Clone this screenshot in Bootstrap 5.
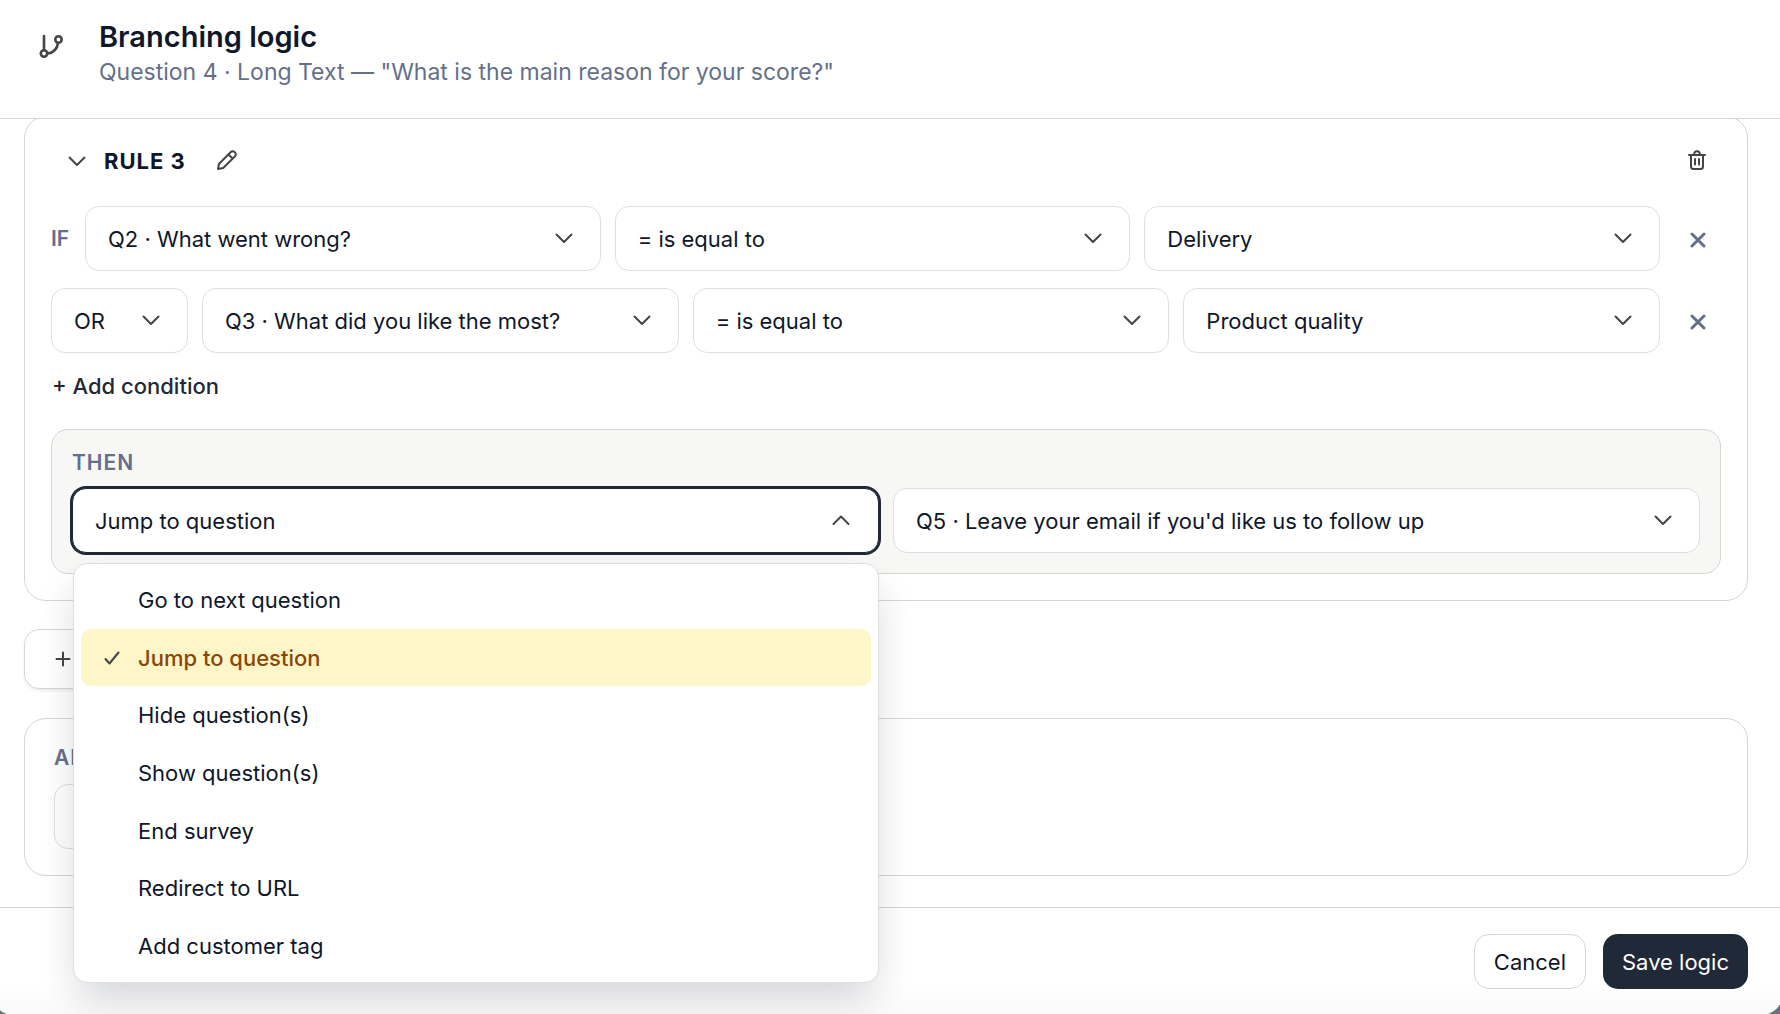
<!DOCTYPE html>
<html lang="en">
<head>
<meta charset="utf-8">
<meta name="viewport" content="width=device-width, initial-scale=1">
<title>Branching logic</title>
<link href="https://cdn.jsdelivr.net/npm/bootstrap@5.3.0/dist/css/bootstrap.min.css" rel="stylesheet">
<style>
  :root { --ink: #0f172a; --navy: #1f2937; --muted: #64708a; --line: #d6d6d1; --line-soft: #dedfe0; --icon: #454545; }
  body { font-family: Inter, "Liberation Sans", sans-serif; font-size: 22px; line-height: 32px; color: var(--ink); background: #6b727e; overflow: hidden; }
  svg { display: block; fill: none; stroke: var(--icon); stroke-width: 2; stroke-linecap: round; stroke-linejoin: round; }
  .dialog { min-height: calc(100vh + 1px); margin: 0 -3px 0 -8px; background: #fff; border-radius: 22px; }
  .dialog-head { position: relative; z-index: 2; background: #fff; border-bottom: 1px solid var(--line); padding: 18px 35px 30px 46px; gap: 34px; }
  .dialog-head svg { margin-top: 13px; stroke-width: 2.6; }
  .dialog-title { font-size: 29px; line-height: 38px; font-weight: 600; }
  .dialog-sub { color: var(--muted); font-size: 23px; }
  .dialog-main { padding: 0 35px 30px 32px; }
  .dialog-foot { border-top: 1px solid var(--line); border-radius: 0 0 22px 22px; background: linear-gradient(#fff 70%, #fafafa); padding: 26px 35px 26px 32px; gap: 17px; }
  .panel { border: 1px solid var(--line); border-radius: 22px; background: #fff; }
  .rule-panel { margin-top: -3px; padding: 21px 26px 26px; }
  .rule-head { height: 46px; padding: 0 14px 0 17px; margin-bottom: 22px; gap: 18px; }
  .rule-name { font-weight: 700; letter-spacing: 1px; }
  .rename { margin-left: 12px; }
  .tag { font-size: 21px; line-height: 26px; font-weight: 600; color: var(--muted); }
  .spaced { letter-spacing: 1px; }
  .plain-btn { border: 0; background: none; padding: 0; color: inherit; }
  .cond { gap: 14px; margin-bottom: 17px; }
  .if-tag { width: 20px; }
  .picker { height: 65px; padding: 0 60px 0 22px; font-size: 22px; line-height: 32px; color: var(--ink); border: 1px solid var(--line-soft); border-radius: 14px; background-color: #fff;
    background-image: url("data:image/svg+xml,%3csvg xmlns='http://www.w3.org/2000/svg' viewBox='0 0 18 11' fill='none' stroke='%23454545' stroke-width='2' stroke-linecap='round' stroke-linejoin='round'%3e%3cpath d='M1.5 1.5 9 9l7.500-7.500'/%3e%3c/svg%3e");
    background-size: 18px 11px; background-position: right 27px center; flex: 1 1 0; min-width: 0; }
  .picker-join { flex: 0 0 137px; padding-right: 40px; }
  .remove { width: 47px; height: 47px; }
  .remove svg { stroke: var(--muted); stroke-width: 3; }
  .add-cond { font-weight: 500; color: var(--navy); padding: 0 1px; }
  .then-box { margin-top: 27px; border: 1px solid var(--line); border-radius: 17px; background: #f7f7f5; padding: 20px; }
  .then-row { gap: 14px; margin-top: 12px; }
  .picker-wrap { flex: 1 1 0; min-width: 0; }
  .picker-open { width: 100%; background-image: none; padding-right: 28px; text-align: left; border-color: var(--navy); box-shadow: 0 0 0 2px var(--navy); }
  .menu { top: 75px; left: 1px; right: 0; min-height: 420px; padding: 7px; border: 1px solid var(--line-soft); border-radius: 14px; box-shadow: 0 20px 40px -6px rgba(15,23,42,.19); font-size: 22px; color: var(--ink); z-index: 5; }
  .menu li { flex: 1 1 0; }
  .menu .dropdown-item { color: var(--ink); border-radius: 10px; height: 100%; padding: 0 24px 0 22px; gap: 17px; }
  .menu .dropdown-item.active { background: #fef5c9; color: #8a4708; font-weight: 500; }
  .menu .tick { width: 18px; }
  .add-rule { margin-top: 28px; width: 170px; height: 60px; padding: 0 30px; border: 1px solid var(--line); border-radius: 15px; box-shadow: 0 2px 3px rgba(0,0,0,.07); }
  .after-panel { margin-top: 29px; padding: 26px 29px; }
  .after-panel .picker { width: 620px; margin-top: 13px; }
  .foot-btn { height: 55px; padding: 0 19px; border-radius: 15px; font-size: 22px; line-height: 32px; font-weight: 400; }
  .foot-cancel { border: 1px solid var(--line); background: #fff; color: var(--ink); }
  .foot-save { background: var(--navy); color: #fff; border: 0; }
</style>
</head>
<body>
<div class="dialog d-flex flex-column" role="dialog" aria-labelledby="dlgTitle">
  <header class="dialog-head d-flex align-items-start">
    <svg width="27" height="31" viewBox="0 0 27 31" aria-hidden="true"><path d="M6 5v14"/><circle cx="6" cy="22.500" r="3.200"/><circle cx="20.500" cy="8.500" r="3.200"/><path d="M20 12c-.8 6-4.500 9.700-10.500 10.500"/></svg>
    <div>
      <h1 class="dialog-title m-0" id="dlgTitle">Branching logic</h1>
      <p class="dialog-sub m-0">Question 4 · Long Text — "What is the main reason for your score?"</p>
    </div>
  </header>

  <main class="dialog-main flex-grow-1">
    <section class="panel rule-panel">
      <div class="rule-head d-flex align-items-center">
        <button class="plain-btn" aria-label="Collapse rule"><svg width="18" height="11" viewBox="0 0 18 11"><path d="M1.500 1.500 9 9l7.500-7.500"/></svg></button>
        <span class="rule-name">RULE 3</span>
        <button class="plain-btn rename" aria-label="Rename rule"><svg width="22" height="24" viewBox="0 0 22 24"><path d="M2 20l.9-5L14.800 3a2.600 2.600 0 0 1 3.800 0l.4.400a2.600 2.600 0 0 1 0 3.800L7.200 19 2 20zM12.500 5.500l4 4"/></svg></button>
        <button class="plain-btn ms-auto" aria-label="Delete rule"><svg width="20" height="24" viewBox="0 0 20 24"><path d="M2 6h16M7 6c0-5 6-5 6 0M4 6v11.500a2.500 2.500 0 0 0 2.500 2.500h7a2.500 2.500 0 0 0 2.500-2.500V6M8 10v5.500M12 10v5.500"/></svg></button>
      </div>

      <div class="cond d-flex align-items-center">
        <span class="tag if-tag">IF</span>
        <select class="form-select picker" aria-label="Question"><option>Q2 · What went wrong?</option></select>
        <select class="form-select picker" aria-label="Operator"><option>= is equal to</option></select>
        <select class="form-select picker" aria-label="Value"><option>Delivery</option></select>
        <button class="plain-btn remove d-flex align-items-center justify-content-center" aria-label="Remove condition"><svg width="16" height="18" viewBox="0 0 16 18"><path d="M2 4l12 12M14 4 2 16"/></svg></button>
      </div>
      <div class="cond d-flex align-items-center">
        <select class="form-select picker picker-join" aria-label="Join with"><option>OR</option><option>AND</option></select>
        <select class="form-select picker" aria-label="Question"><option>Q3 · What did you like the most?</option></select>
        <select class="form-select picker" aria-label="Operator"><option>= is equal to</option></select>
        <select class="form-select picker" aria-label="Value"><option>Product quality</option></select>
        <button class="plain-btn remove d-flex align-items-center justify-content-center" aria-label="Remove condition"><svg width="16" height="18" viewBox="0 0 16 18"><path d="M2 4l12 12M14 4 2 16"/></svg></button>
      </div>
      <button class="plain-btn add-cond d-block">+ Add condition</button>

      <div class="then-box">
        <div class="tag spaced">THEN</div>
        <div class="then-row d-flex">
          <div class="picker-wrap dropdown">
            <button class="picker picker-open d-flex align-items-center justify-content-between" aria-haspopup="listbox" aria-expanded="true">Jump to question
              <svg width="18" height="11" viewBox="0 0 18 11" aria-hidden="true"><path d="M1.500 9 9 1.500l7.500 7.500"/></svg></button>
            <ul class="menu dropdown-menu show d-flex flex-column m-0">
              <li><button class="dropdown-item d-flex align-items-center"><span class="tick"></span>Go to next question</button></li>
              <li><button class="dropdown-item active d-flex align-items-center" aria-current="true"><span class="tick"><svg width="18" height="16" viewBox="0 0 18 16"><path d="M2.500 9l4 4.500L15.500 2.500"/></svg></span>Jump to question</button></li>
              <li><button class="dropdown-item d-flex align-items-center"><span class="tick"></span>Hide question(s)</button></li>
              <li><button class="dropdown-item d-flex align-items-center"><span class="tick"></span>Show question(s)</button></li>
              <li><button class="dropdown-item d-flex align-items-center"><span class="tick"></span>End survey</button></li>
              <li><button class="dropdown-item d-flex align-items-center"><span class="tick"></span>Redirect to URL</button></li>
              <li><button class="dropdown-item d-flex align-items-center"><span class="tick"></span>Add customer tag</button></li>
            </ul>
          </div>
          <div class="picker-wrap">
            <select class="form-select picker w-100" aria-label="Target question"><option>Q5 · Leave your email if you'd like us to follow up</option></select>
          </div>
        </div>
      </div>
    </section>

    <button class="btn add-rule d-flex align-items-center" aria-label="Add rule"><svg width="16" height="16" viewBox="0 0 16 16" aria-hidden="true"><path d="M8 1.500v13M1.500 8h13"/></svg></button>

    <section class="panel after-panel">
      <label class="tag spaced d-block" for="fallback">ALL</label>
      <select class="form-select picker" id="fallback"><option></option></select>
    </section>
  </main>

  <footer class="dialog-foot d-flex justify-content-end">
    <button class="btn foot-btn foot-cancel">Cancel</button>
    <button class="btn foot-btn foot-save">Save logic</button>
  </footer>
</div>
<script src="https://cdn.jsdelivr.net/npm/bootstrap@5.3.0/dist/js/bootstrap.bundle.min.js"></script>
</body>
</html>
